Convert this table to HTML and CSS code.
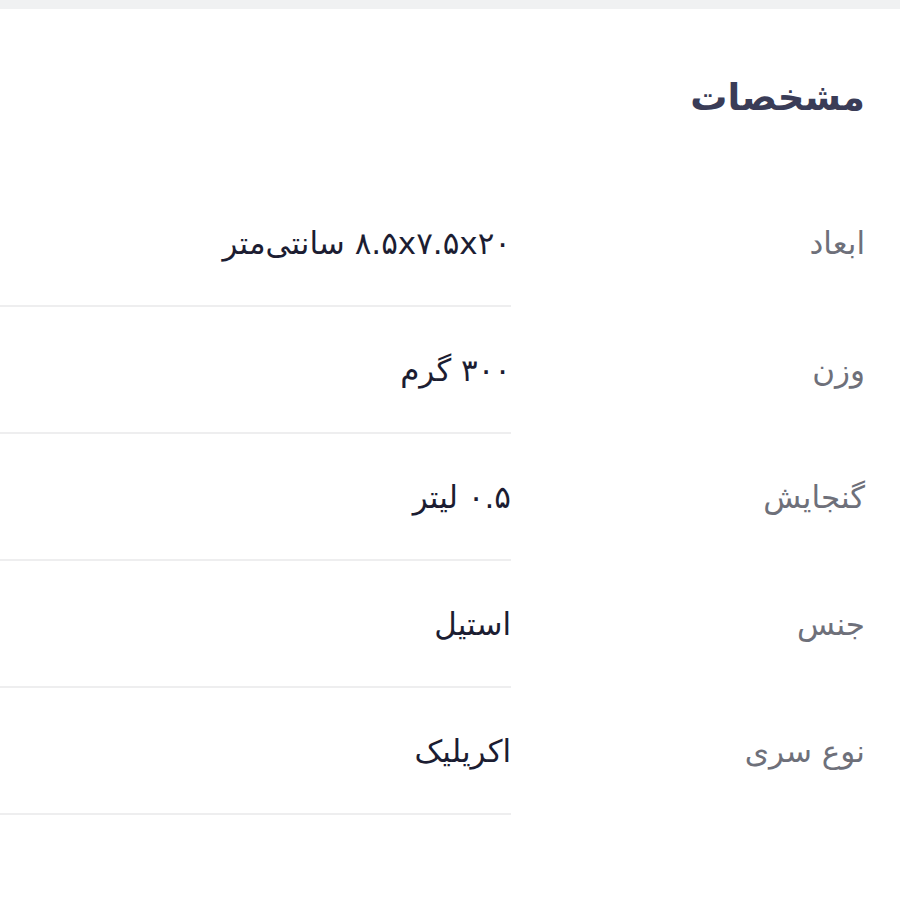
FILE: index.html
```html
<!DOCTYPE html>
<html lang="fa" dir="rtl">
<head>
<meta charset="utf-8">
<title>مشخصات</title>
<link rel="stylesheet" href="styles.css">
</head>
<body>
<div class="topbar"></div>
<section class="specs">
  <h2 class="specs-title">مشخصات</h2>
  <dl class="spec-list">
    <div class="spec-row">
      <dt class="spec-label">ابعاد</dt>
      <dd class="spec-value">۸.۵x۷.۵x۲۰ سانتی‌متر</dd>
    </div>
    <div class="spec-row">
      <dt class="spec-label">وزن</dt>
      <dd class="spec-value">۳۰۰ گرم</dd>
    </div>
    <div class="spec-row">
      <dt class="spec-label">گنجایش</dt>
      <dd class="spec-value">۰.۵ لیتر</dd>
    </div>
    <div class="spec-row">
      <dt class="spec-label">جنس</dt>
      <dd class="spec-value">استیل</dd>
    </div>
    <div class="spec-row">
      <dt class="spec-label">نوع سری</dt>
      <dd class="spec-value">اکریلیک</dd>
    </div>
  </dl>
</section>
</body>
</html>
```
FILE: styles.css
```css
* { box-sizing: border-box; }
html, body {
  margin: 0;
  padding: 0;
  background: #ffffff;
}
body {
  font-family: "DejaVu Sans", "Noto Sans", sans-serif;
  width: 900px;
  height: 900px;
  overflow: hidden;
}
.topbar {
  height: 9px;
  background: #f0f1f2;
}
.specs {
  padding-right: 35px;
}
.specs-title {
  margin: 0;
  padding-top: 68px;
  height: 171px;
  font-size: 37px;
  font-weight: bold;
  line-height: 42px;
  color: #3a3c57;
}
.spec-list {
  margin: 0;
  padding: 0;
}
.spec-row {
  display: grid;
  grid-template-columns: 354px 511px;
  height: 127px;
}
.spec-label {
  margin: 0;
  display: flex;
  align-items: center;
  padding-bottom: 2px;
  font-size: 31px;
  color: #6e707a;
}
.spec-value {
  margin: 0;
  display: flex;
  align-items: center;
  border-bottom: 2px solid #eeeeef;
  font-size: 31px;
  color: #1c1d32;
}
```
